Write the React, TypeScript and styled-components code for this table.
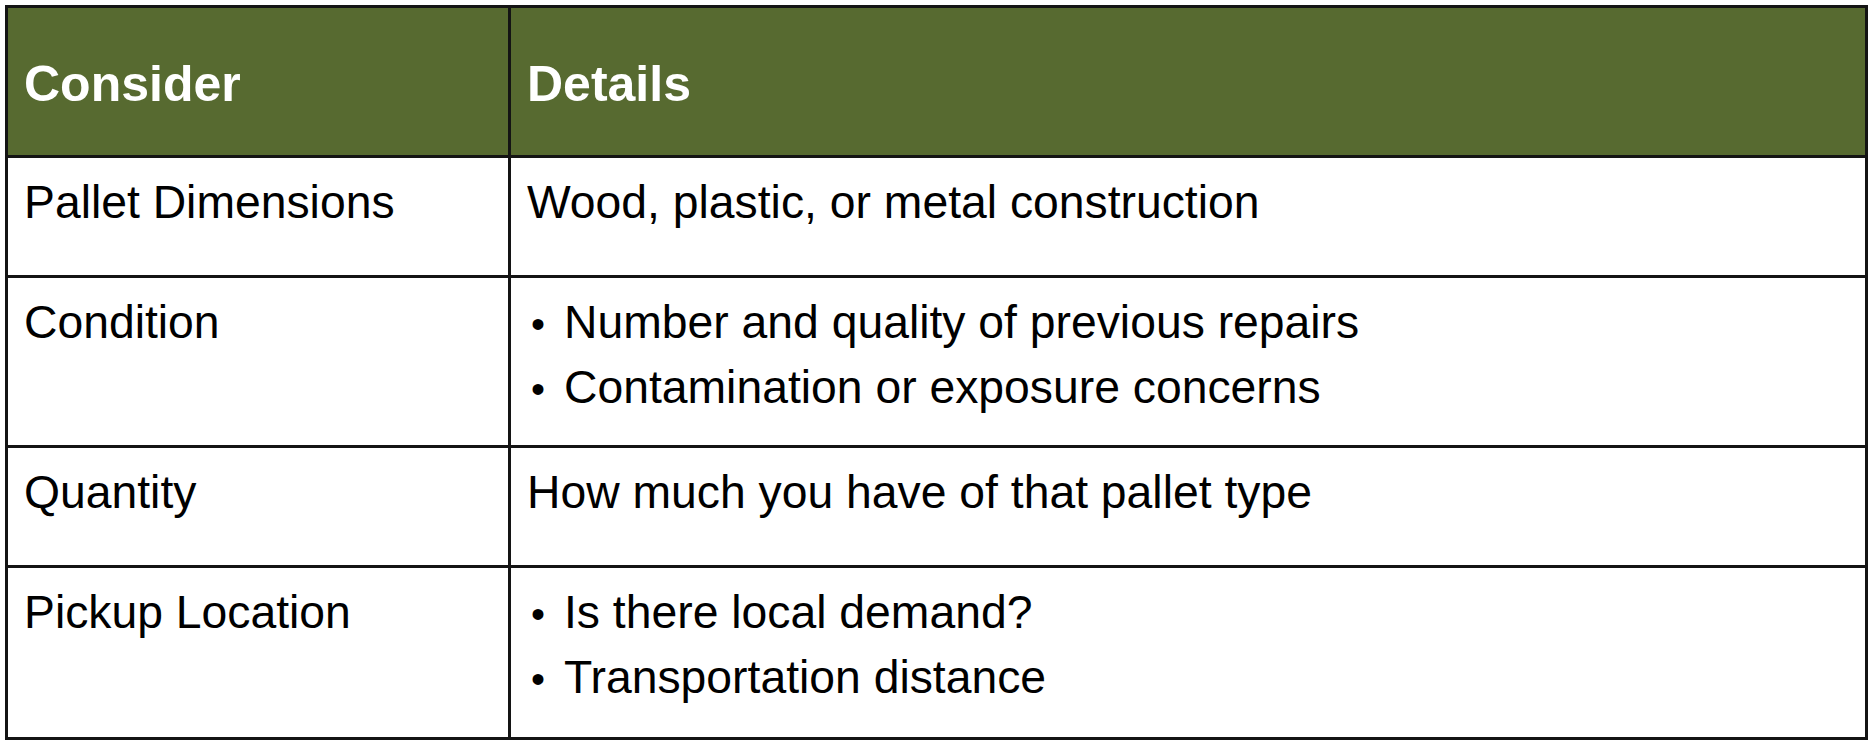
import { Fragment } from "react"
import styled, { createGlobalStyle } from "styled-components"

const Global = createGlobalStyle`
  html, body { margin: 0; padding: 0; background: #ffffff; }
  body { font-family: "Liberation Sans", Arial, Helvetica, sans-serif; color: #000; }
`

const Page = styled.div`
  padding: 5px 0 0 5px;
`

const Table = styled.div`
  display: grid;
  grid-template-columns: 500px 1354px;
  grid-template-rows: 147px 117px 167px 117px 169px;
  gap: 3px;
  padding: 3px;
  width: 1863px;
  box-sizing: border-box;
  background: #141414;
`

const Head = styled.div`
  background: #576a30;
  color: #ffffff;
  font-weight: 700;
  font-size: 50px;
  line-height: 60px;
  padding: 46px 16px 0 16px;
`

const Cell = styled.div`
  background: #ffffff;
  font-size: 46.3px;
  line-height: 63px;
  padding: 13px 16px 0 16px;
`

const List = styled.ul`
  list-style: none;
  margin: 0;
  padding: 0;
`

const Item = styled.li`
  display: flex;
  align-items: baseline;
`

const Dot = styled.span`
  width: 37px;
  flex: none;
  padding-left: 4px;
  box-sizing: border-box;
  font-size: 40px;
`

const rows: { label: string; details: string[]; bullets?: boolean }[] = [
  { label: "Pallet Dimensions", details: ["Wood, plastic, or metal construction"] },
  {
    label: "Condition",
    details: ["Number and quality of previous repairs", "Contamination or exposure concerns"],
    bullets: true,
  },
  { label: "Quantity", details: ["How much you have of that pallet type"] },
  {
    label: "Pickup Location",
    details: ["Is there local demand?", "Transportation distance"],
    bullets: true,
  },
]

export default function App() {
  return (
    <>
      <Global />
      <Page>
        <Table>
          <Head>Consider</Head>
          <Head>Details</Head>
          {rows.map((r) => (
            <Fragment key={r.label}>
              <Cell>{r.label}</Cell>
              <Cell>
                {r.bullets ? (
                  <List>
                    {r.details.map((d) => (
                      <Item key={d}>
                        <Dot>•</Dot>
                        {d}
                      </Item>
                    ))}
                  </List>
                ) : (
                  r.details[0]
                )}
              </Cell>
            </Fragment>
          ))}
        </Table>
      </Page>
    </>
  )
}
